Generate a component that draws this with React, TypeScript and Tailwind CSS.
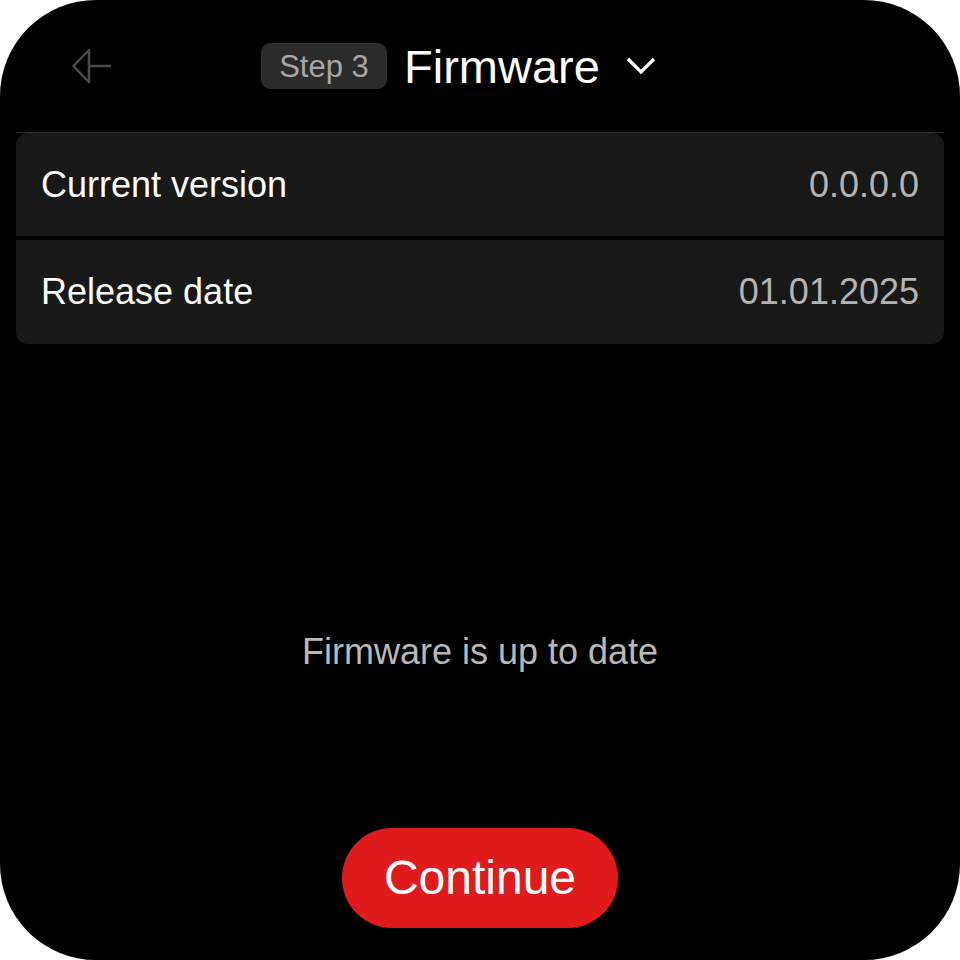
export default function App() {
  const rows = [
    { label: "Current version", value: "0.0.0.0" },
    { label: "Release date", value: "01.01.2025" },
  ];

  return (
    <div className="w-[960px] h-[960px] bg-white" style={{ fontFamily: "'Liberation Sans', Arial, sans-serif" }}>
      <div className="w-full h-full rounded-[96px] bg-black flex flex-col overflow-hidden">
        {/* header */}
        <div className="mx-[16px] h-[133px] flex items-center border-b border-[#2c2c2c] pl-[56px]">
          <svg width="40" height="34" viewBox="0 0 40 34" fill="none" stroke="#4a4a4a" strokeWidth="2.5">
            <path d="M17 1 L1.5 17 L17 33 Z" strokeLinejoin="miter" />
            <path d="M17 17 H39" />
          </svg>
          <span className="ml-[149px] h-[46px] w-[126px] rounded-[9px] bg-[#2b2b2b] text-[#a6a6a6] text-[31px] flex items-center justify-center leading-none">
            Step 3
          </span>
          <span className="ml-[17px] text-white text-[47px] leading-none">Firmware</span>
          <svg className="ml-[26px]" width="30" height="18" viewBox="0 0 30 18" fill="none" stroke="white" strokeWidth="3.2">
            <path d="M2 2 L15 15 L28 2" />
          </svg>
        </div>

        {/* info card */}
        <div className="mx-[16px] flex flex-col gap-[4px]">
          {rows.map((r, i) => (
            <div
              key={r.label}
              className={
                "px-[25px] bg-[#181818] flex items-center justify-between " +
                (i === 0 ? "h-[103px] rounded-t-[12px]" : "h-[104px] rounded-b-[12px]")
              }
            >
              <span className="text-white text-[36px]">{r.label}</span>
              <span className="text-[#b3b3b3] text-[36px]">{r.value}</span>
            </div>
          ))}
        </div>

        <p className="mt-[288px] text-center text-[#b8b8b8] text-[36px] leading-[40px]">Firmware is up to date</p>

        <div className="mt-[156px] flex justify-center">
          <button className="w-[276px] h-[100px] rounded-full bg-[#e01b1b] text-white text-[48px]">Continue</button>
        </div>
      </div>
    </div>
  );
}
